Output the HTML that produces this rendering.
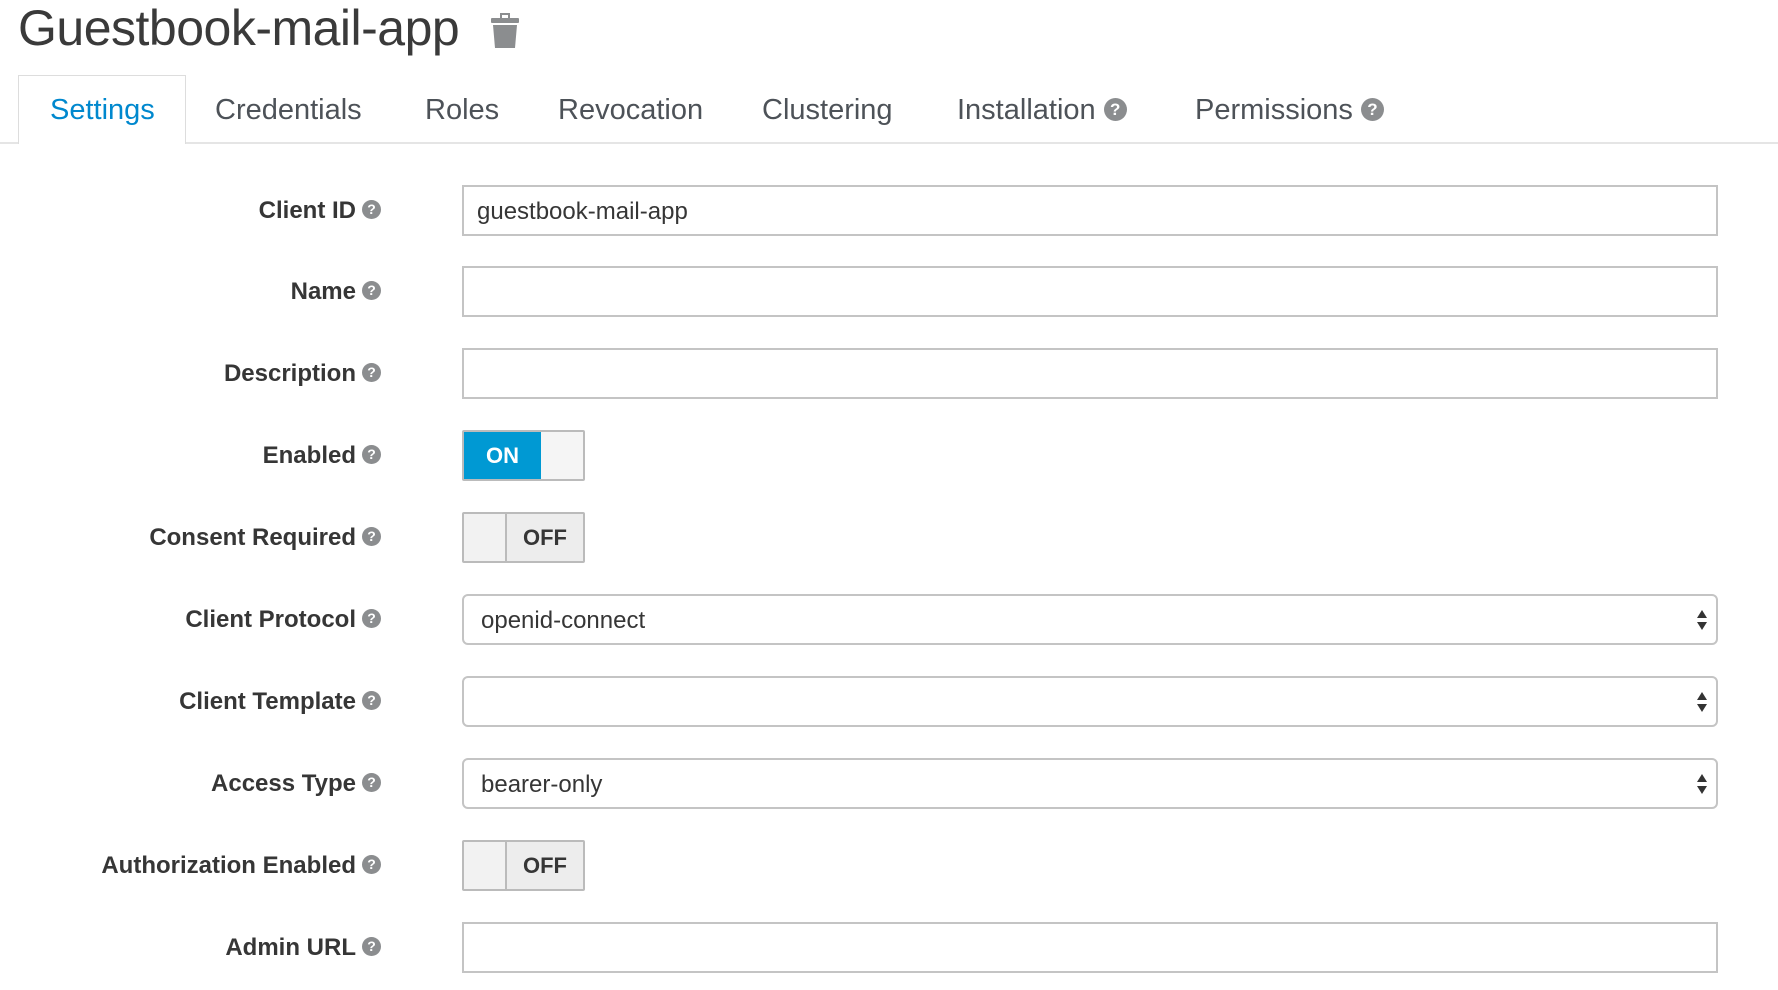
<!DOCTYPE html>
<html><head><meta charset="utf-8"><style>
*{box-sizing:border-box;margin:0;padding:0}
body{width:1778px;height:990px;background:#fff;font-family:"Liberation Sans",sans-serif;position:relative;overflow:hidden;color:#363636}
.a{position:absolute}
.title{left:18px;top:-2px;font-size:50px;color:#3a3a3a;font-weight:normal;letter-spacing:-0.5px;line-height:60px}
.tabline{left:0;top:142px;width:1778px;height:2px;background:#e5e5e5}
.tabact{left:18px;top:75px;width:168px;height:69px;border:1px solid #ddd;border-bottom:none;background:#fff}
.tab{top:92px;font-size:29px;color:#4d5258;line-height:36px;white-space:nowrap}
.q{display:inline-block;width:20px;height:20px;border-radius:50%;background:#8b8d8f;color:#fff;font-size:15px;font-weight:bold;text-align:center;line-height:20px;vertical-align:middle}
.lbl{right:1397px;font-size:24px;font-weight:bold;color:#363636;white-space:nowrap;line-height:30px}
.lbl .q{width:19px;height:19px;line-height:19px;font-size:14px;margin-left:6px;position:relative;top:-2px}
.inp{left:462px;width:1256px;height:51px;border:2px solid #c4c4c4;background:#fff;font-size:24px;color:#363636;line-height:49px;padding-left:13px}
.sel{border-radius:6px;padding-left:17px}
.arr{position:absolute;right:8px;top:12px;width:12px;height:24px}
.tg{left:462px;width:123px;height:51px;border:2px solid #bbb;border-radius:2px;background:#f2f2f2;overflow:hidden}
.on{position:absolute;left:0;top:0;width:77px;height:47px;background:#0099d3;color:#fff;font-weight:bold;font-size:22px;text-align:center;line-height:47px}
.off{position:absolute;right:0;top:0;width:78px;height:47px;border-left:2px solid #bbb;color:#363636;font-weight:bold;font-size:22px;text-align:center;line-height:47px;background:#ededed}
</style></head><body>
<div class="a title">Guestbook-mail-app</div>
<svg class="a" style="left:490px;top:13px" width="30" height="36" viewBox="0 0 30 36"><rect x="10" y="0" width="10" height="5" fill="#8b8d8f"/><rect x="12" y="2" width="6" height="3" fill="#fff"/><rect x="1" y="5" width="28" height="5" rx="1" fill="#8b8d8f"/><path d="M3 12h24l-2 23H5z" fill="#8b8d8f"/></svg>
<div class="a tabline"></div>
<div class="a tabact"></div>
<div class="a tab" style="left:50px;color:#0088ce">Settings</div>
<div class="a tab" style="left:215px">Credentials</div>
<div class="a tab" style="left:425px">Roles</div>
<div class="a tab" style="left:558px">Revocation</div>
<div class="a tab" style="left:762px">Clustering</div>
<div class="a tab" style="left:957px">Installation <span class="q" style="width:23px;height:23px;line-height:23px;font-size:17px;position:relative;top:-2px">?</span></div>
<div class="a tab" style="left:1195px">Permissions <span class="q" style="width:23px;height:23px;line-height:23px;font-size:17px;position:relative;top:-2px">?</span></div>

<div class="a lbl" style="top:196px">Client ID<span class="q">?</span></div>
<div class="a inp" style="top:185px">guestbook-mail-app</div>

<div class="a lbl" style="top:277px">Name<span class="q">?</span></div>
<div class="a inp" style="top:266px"></div>

<div class="a lbl" style="top:359px">Description<span class="q">?</span></div>
<div class="a inp" style="top:348px"></div>

<div class="a lbl" style="top:441px">Enabled<span class="q">?</span></div>
<div class="a tg" style="top:430px;background:#f5f5f5"><div class="on">ON</div></div>

<div class="a lbl" style="top:523px">Consent Required<span class="q">?</span></div>
<div class="a tg" style="top:512px"><div class="off">OFF</div></div>

<div class="a lbl" style="top:605px">Client Protocol<span class="q">?</span></div>
<div class="a inp sel" style="top:594px">openid-connect<svg class="arr" viewBox="0 0 12 24"><path d="M6 2L11 10H1z M6 22L11 14H1z" fill="#333"/></svg></div>

<div class="a lbl" style="top:687px">Client Template<span class="q">?</span></div>
<div class="a inp sel" style="top:676px"><svg class="arr" viewBox="0 0 12 24"><path d="M6 2L11 10H1z M6 22L11 14H1z" fill="#333"/></svg></div>

<div class="a lbl" style="top:769px">Access Type<span class="q">?</span></div>
<div class="a inp sel" style="top:758px">bearer-only<svg class="arr" viewBox="0 0 12 24"><path d="M6 2L11 10H1z M6 22L11 14H1z" fill="#333"/></svg></div>

<div class="a lbl" style="top:851px">Authorization Enabled<span class="q">?</span></div>
<div class="a tg" style="top:840px"><div class="off">OFF</div></div>

<div class="a lbl" style="top:933px">Admin URL<span class="q">?</span></div>
<div class="a inp" style="top:922px"></div>
</body></html>
